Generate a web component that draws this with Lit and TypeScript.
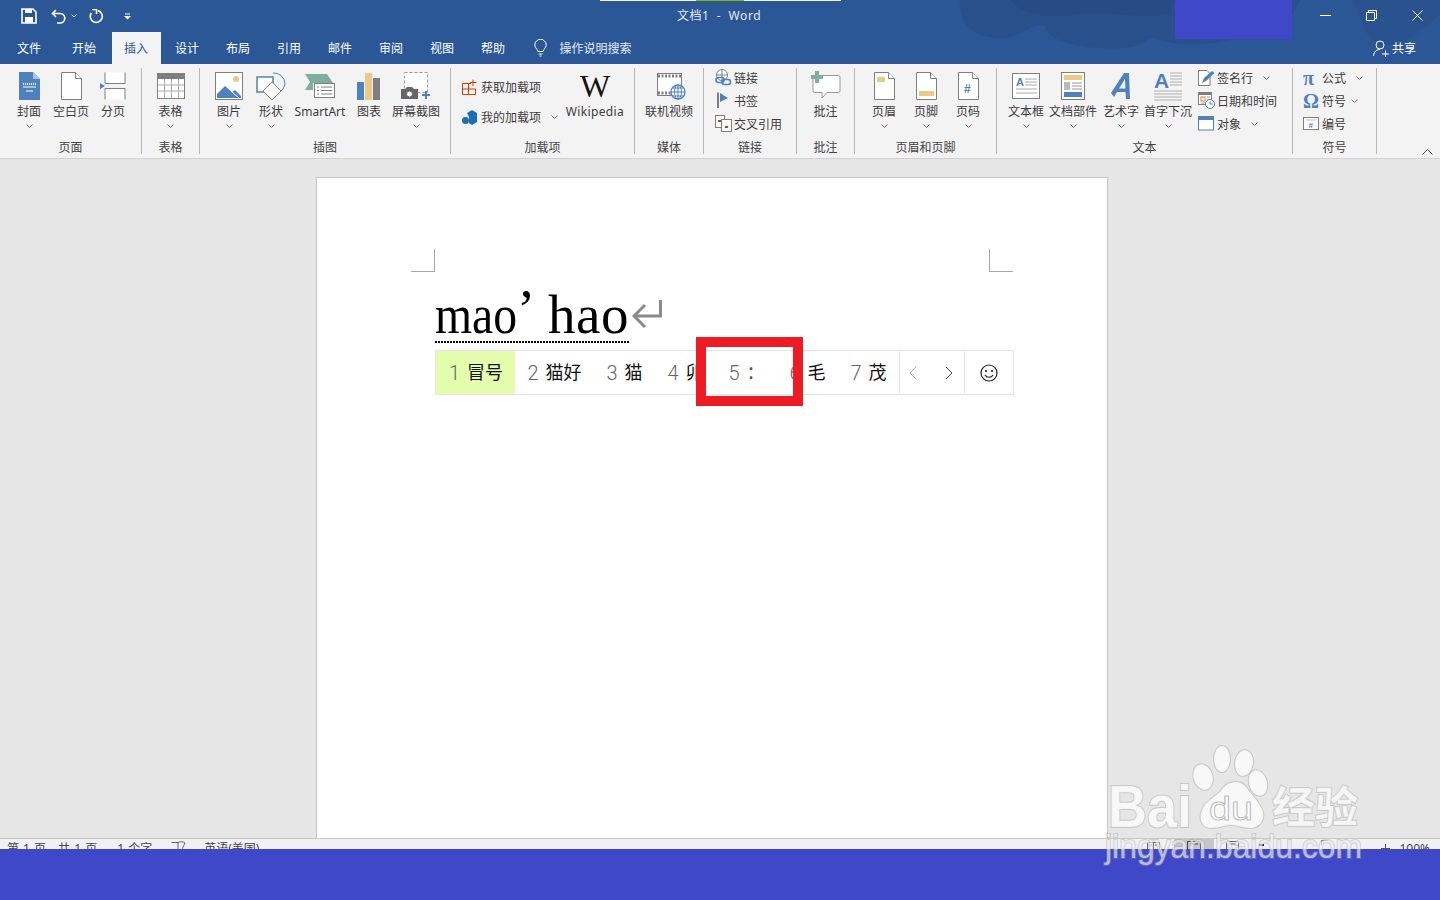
import { LitElement, html, svg, css } from "lit";
import { customElement } from "lit/decorators.js";

const B = "#4f81bd", G = "#7f7f7f", T = "#edc987", M = "#7fae9d", O = "#d83b01";

const chev = html`<svg class="chev" width="7" height="4" viewBox="0 0 7 4"><path d="M.5.5l3 3 3-3" fill="none" stroke="#666"/></svg>`;

const page = (inner: unknown = "") => html`<svg width="21" height="28" viewBox="0 0 21 28"><path d="M.5.5H14.500L20.500 6.500V27.500H.5Z" fill="#fff" stroke="${G}"/><path d="M14.500.5V6.500H20.500" fill="#fff" stroke="${G}"/>${inner}</svg>`;

const I: Record<string, unknown> = {
  cover: html`<svg width="21" height="28" viewBox="0 0 21 28"><path d="M0 0H14L21 7V28H0Z" fill="${B}"/><path d="M14 0L21 7H14Z" fill="#a9c4e2"/><path d="M4 12H17" stroke="#fff" stroke-width="2" stroke-dasharray="1 1"/><path d="M4 15H17M7 19H14" stroke="#fff"/></svg>`,
  blank: page(),
  brk: html`<svg width="26" height="28" viewBox="0 0 26 28"><path d="M5 .5V11.500H25V.5M5 27.500V16.500H25V27.500" fill="#fff" stroke="${G}"/><path d="M0 11L5 14L0 17Z" fill="${B}"/></svg>`,
  table: html`<svg width="28" height="26" viewBox="0 0 28 26"><rect x=".5" y=".5" width="27" height="25" fill="#fff" stroke="${G}"/><rect width="28" height="6" fill="${G}"/><path d="M.5 12H27M.5 18H27M7.500 6V25M14.500 6V25M21.500 6V25" stroke="#aaa"/></svg>`,
  pic: html`<svg width="28" height="28" viewBox="0 0 28 28"><rect x=".5" y=".5" width="27" height="27" fill="#fff" stroke="${G}"/><circle cx="21" cy="7" r="3" fill="${T}"/><path d="M2 26V22L10 14L17 20L20 18L26 24V26Z" fill="${B}"/><path d="M16 19L24 26" stroke="#fff"/></svg>`,
  shape: html`<svg width="30" height="30" viewBox="0 0 30 30"><path d="M17 2A11 11 0 0 1 29 13A11 11 0 0 1 25 20" fill="none" stroke="${B}"/><rect x="1" y="6" width="16" height="15" fill="#fff" stroke="${B}" stroke-width="1.500"/><path d="M16 11L25 20L16 29L7 20Z" fill="#fff" stroke="${G}"/></svg>`,
  smart: html`<svg width="30" height="26" viewBox="0 0 30 26"><path d="M0 1H22L28 10H8V17H0L5 9Z" fill="${M}"/><rect x="9.500" y="10.500" width="20" height="14" fill="#fff" stroke="${G}"/><path d="M16 14H27M16 17.500H27M16 21H27M12 14H14M12 17.500H14M12 21H14" stroke="${G}"/></svg>`,
  chart: html`<svg width="24" height="27" viewBox="0 0 24 27"><rect y="9" width="7" height="18" fill="${B}"/><rect x="8" width="7" height="27" fill="${T}"/><rect x="16" y="5" width="7" height="22" fill="${G}"/></svg>`,
  shot: html`<svg width="30" height="28" viewBox="0 0 30 28"><rect x="3.500" y=".5" width="23" height="20" fill="#fff" stroke="#999" stroke-dasharray="3 2"/><path d="M0 17H4L6 15H11L13 17H17V27H0Z" fill="#666"/><circle cx="8.500" cy="22" r="3" fill="#fff" stroke="#666"/><path d="M25 19V27M21 23H29" stroke="${B}" stroke-width="2"/></svg>`,
  get: html`<svg width="15" height="16" viewBox="0 0 15 16"><path d="M.5 4.500H6.500V15.500H.5ZM.5 10H13.500V15.500H6.500M6.500 4.500H9" fill="none" stroke="${O}"/><path d="M11 .5V7M8 3.500H14.500" stroke="${O}"/></svg>`,
  mine: html`<svg width="15" height="15" viewBox="0 0 15 15"><path d="M5 3L10 0L15 3V12L10 15L7 13V7Z" fill="#1b6fb5"/><circle cx="3.500" cy="10.500" r="3.500" fill="#1b6fb5"/></svg>`,
  video: html`<svg width="30" height="30" viewBox="0 0 30 30" style="margin-left:6px"><rect x=".5" y="2.500" width="24" height="22" fill="#fff" stroke="${G}"/><path d="M1 5H24M1 22H24" stroke="${G}" stroke-width="3" stroke-dasharray="2 1.500"/><circle cx="21" cy="21" r="7" fill="#fff" stroke="${B}" stroke-width="1.300"/><path d="M14 21H28M21 14V28M16 17H26M16 25H26" stroke="${B}"/><ellipse cx="21" cy="21" rx="3.500" ry="7" fill="none" stroke="${B}"/></svg>`,
  link: html`<svg width="17" height="17" viewBox="0 0 17 17"><circle cx="7" cy="6" r="5.500" fill="#fff" stroke="${G}"/><path d="M1.500 6H12.500M7 .5V11.500" stroke="${G}"/><rect x="1" y="8.500" width="8" height="5" rx="2.500" fill="none" stroke="${B}" stroke-width="1.600"/><rect x="7" y="10.500" width="8.500" height="5" rx="2.500" fill="none" stroke="${B}" stroke-width="1.600"/></svg>`,
  flag: html`<svg width="17" height="17" viewBox="0 0 17 17"><path d="M3 .5V16" stroke="${G}" stroke-width="2"/><path d="M5 1L13 6L5 10Z" fill="${B}"/></svg>`,
  xref: html`<svg width="17" height="17" viewBox="0 0 17 17"><rect x=".5" y=".5" width="9" height="12" fill="#fff" stroke="${G}"/><rect x="6.500" y="4.500" width="10" height="12" fill="#fff" stroke="${G}"/><path d="M3 6H6M10 12H13" stroke="${O}" stroke-width="2"/></svg>`,
  note: html`<svg width="30" height="30" viewBox="0 0 30 30"><path d="M3.500 4.500H27.500A1.500 1.500 0 0 1 29 6V20A1.500 1.500 0 0 1 27.500 21.500H16L11 27V21.500H3.500A1.500 1.500 0 0 1 2 20V6A1.500 1.500 0 0 1 3.500 4.500Z" fill="#fff" stroke="#999"/><path d="M6 0V12M0 6H12" stroke="${M}" stroke-width="4"/></svg>`,
  header: page(svg`<rect x="3" y="5" width="8" height="5" fill="${T}"/>`),
  footer: page(svg`<rect x="3" y="19" width="15" height="5" fill="${T}"/>`),
  pnum: page(svg`<text x="6" y="21" font-size="12" font-weight="700" font-family="Liberation Sans" fill="${B}">#</text>`),
  tbox: html`<svg width="28" height="26" viewBox="0 0 28 26"><rect x=".5" y=".5" width="27" height="25" fill="#fff" stroke="${G}"/><text x="4" y="13" font-size="11" font-weight="700" font-family="Liberation Sans" fill="${B}">A</text><path d="M13 6H25M13 9H25M13 12H25M4 16H25M4 20H25" stroke="#aaa"/></svg>`,
  parts: html`<svg width="24" height="28" viewBox="0 0 24 28"><rect x=".5" y=".5" width="23" height="27" fill="#fff" stroke="${G}"/><rect x="3" y="3" width="18" height="5" fill="${T}"/><rect x="3" y="10" width="6" height="8" fill="#bbb"/><path d="M11 11H21M11 14H21M11 17H21" stroke="#999"/><rect x="3" y="20" width="18" height="5" fill="${B}"/></svg>`,
  art: html`<svg width="22" height="28" viewBox="0 0 22 28"><path d="M1 21L14 1H19L20 27H16L15.500 20L7 20L4 25ZM9 16.500H15.500L15 7Z" fill="${B}" fill-rule="evenodd"/></svg>`,
  drop: html`<svg width="29" height="30" viewBox="0 0 29 30"><text x="0" y="17" font-size="21" font-weight="700" font-family="Liberation Sans" fill="${B}">A</text><path d="M16 2H28M16 5H28M16 8H28M16 11H28M16 14H28M0 20H28M0 23H28M0 26H28M0 29H28" stroke="#b0b0b0"/></svg>`,
  sign: html`<svg width="17" height="17" viewBox="0 0 17 17"><path d="M.5 1.500H9L12 4.500V16.500H.5Z" fill="#fff" stroke="${G}"/><path d="M4 14L6 9L14 2L16.500 4L8 12Z" fill="${B}"/></svg>`,
  date: html`<svg width="17" height="17" viewBox="0 0 17 17"><rect x=".5" y=".5" width="13" height="12" fill="#fff" stroke="${G}"/><rect width="14" height="3" fill="${G}"/><rect x="3" y="5" width="4" height="4" fill="#fff" stroke="#d9822b"/><path d="M9 5H12M9 8H12M3 11H12" stroke="#aaa"/><circle cx="12" cy="12" r="4.500" fill="#fff" stroke="${B}"/><path d="M12 9.500V12H14.500" fill="none" stroke="${B}"/></svg>`,
  obj: html`<svg width="17" height="15" viewBox="0 0 17 15"><rect x=".5" y=".5" width="15" height="13.500" fill="#fff" stroke="${B}"/><rect width="16" height="4" fill="${B}"/></svg>`,
  num: html`<svg width="16" height="13" viewBox="0 0 16 13"><rect x=".5" y=".5" width="15" height="12" fill="#fff" stroke="${G}"/><path d="M3 3H13" stroke="#bbb"/><text x="5.500" y="11" font-size="8" font-weight="700" font-family="Liberation Sans" fill="${B}">#</text></svg>`,
};

const L = (label: string, icon: unknown, w: number, more = true) => html`
  <div class="large" style="width:${w}px">
    <div class="lic">${icon}</div>
    <div class="ll">${label}</div>
    ${more ? chev : ""}
  </div>`;

const S = (label: string, icon: unknown, more = false, cls = "") => html`
  <div class="small">
    <span class="sic">${icon}</span><span>${label}</span>${more ? html`<span class="sch ${cls}">${chev}</span>` : ""}
  </div>`;

const Gp = (w: number, label: string, body: unknown, cls = "") => html`
  <section class="group" style="width:${w}px">
    <div class="body ${cls}">${body}</div>
    <div class="gl">${label}</div>
  </section>`;

const tabs = ["文件", "开始", "插入", "设计", "布局", "引用", "邮件", "审阅", "视图", "帮助"];
const cands: [string, string][] = [["1", "冒号"], ["2", "猫好"], ["3", "猫"], ["4", "卯"], ["5", "："], ["6", "毛"], ["7", "茂"]];

@customElement("app-root")
export class AppRoot extends LitElement {
  static styles = css`
    :host { display: block; width: 1440px; height: 900px; position: relative; overflow: hidden; background: #e6e6e6;
      font-family: "Noto Sans", "Noto Sans CJK SC", sans-serif; font-size: 12px; color: #3c3c3c; }
    svg { display: block; }
    .head { height: 64px; background: #2b5797; position: relative; color: #fff; }
    .blobs { position: absolute; left: 940px; top: 0; }
    .strip { position: absolute; left: 600px; top: 0; width: 241px; height: 1px; background: #f4f4f4; }
    .strip i { display: block; margin-left: 96px; width: 48px; height: 1px; background: #7fba00; }
    .patch { position: absolute; left: 1175px; top: 0; width: 117px; height: 39px; background: #3f48c9; }
    .title { display: grid; grid-template-columns: 677px auto 1fr; height: 32px; position: relative; align-items: center; }
    .quick { display: flex; align-items: center; padding-left: 21px; }
    .cap { color: #e4eaf3; font-size: 12px; letter-spacing: .55px; white-space: pre; margin-top: -2px; }
    .win { display: flex; justify-content: flex-end; margin-top: -2px; }
    .win span { width: 46px; display: flex; justify-content: center; }
    .tabs { display: flex; height: 32px; position: relative; gap: 2px; padding-left: 4.5px; align-items: stretch; }
    .tab { width: 49px; display: flex; align-items: center; justify-content: center; color: #fff; }
    .tab.t1 { margin-left: 4px; }
    .tab.t2 { margin-left: 1px; }
    .tab.on { background: #f3f3f3; color: #2b5797; }
    .tell { display: flex; align-items: center; margin-left: 14px; gap: 13px; color: #e6ecf5; }
    .share { margin-left: auto; display: flex; align-items: center; gap: 3px; margin-right: 24px; }
    .ribbon { background: #f3f3f3; border-bottom: 1px solid #d2d2d2; display: flex; padding-top: 4px; height: 90px; }
    .group { height: 86px; border-right: 1px solid #b8b8b8; box-sizing: border-box; flex: none; display: flex; flex-direction: column; }
    .body { height: 73px; display: flex; white-space: nowrap; flex: none; }
    .c { justify-content: center; }
    .p8 { padding-left: 8px; } .p11 { padding-left: 11px; } .p6 { padding-left: 6px; } .p10 { padding-left: 10px; }
    .gl { height: 13px; line-height: 14px; text-align: center; color: #444; flex: none; }
    .large { flex: none; display: flex; flex-direction: column; align-items: center; padding-top: 2px; }
    .lic { height: 32px; margin-bottom: 2px; display: flex; align-items: center; justify-content: center; }
    .ll { height: 16px; line-height: 16px; }
    .chev { margin-top: 4px; }
    .sch .chev { margin: 0; }
    .col { display: flex; flex-direction: column; margin-top: -2px; }
    .col.tight { margin-top: 8px; gap: 8px; width: 103px; }
    .col.rows { margin-left: 7px; }
    .small { display: flex; align-items: center; height: 23px; }
    .col.tight .small { height: 22px; }
    .sic { width: 19px; flex: none; display: flex; align-items: center; }
    .sch { margin-left: 10px; } .sch.near { margin-left: 5px; }
    .glyph { font: 700 20px "Liberation Serif", serif; color: #4f81bd; line-height: 1; }
    .wmark { font: 400 32px/32px "Liberation Serif", serif; color: #111; height: 32px; display: block; }
    .wiki { letter-spacing: .35px; }
    .caret { margin-left: auto; margin-right: 7px; align-self: flex-end; margin-bottom: 3px; }
    .work { height: 679px; background: #e6e6e6; }
    .doc { margin-left: 316px; width: 792px; height: 661px; position: relative; top: 18px; box-sizing: border-box; background: #fff; border: 1px solid #c6c6c6; border-bottom: 0; padding-top: 71px; }
    .marks { margin-left: 94px; width: 602px; height: 23px; display: flex; justify-content: space-between; }
    .mk { width: 24px; height: 23px; box-sizing: border-box; border-bottom: 1px solid #a6a6a6; border-right: 1px solid #a6a6a6; }
    .mk.r { border-right: 0; border-left: 1px solid #a6a6a6; }
    .line { margin-left: 118px; display: flex; height: 70px; }
    .ink { height: 69px; box-sizing: border-box; padding-top: 18.4px; font: 400 55px/50px "Liberation Serif", serif; color: #000; white-space: pre; display: flex; width: 194px; }
    .ink span { display: block; flex: none; }
    .ink .mao { width: 82px; transform: scaleX(.866); transform-origin: left; }
    .ink .q { width: 31px; transform: translateY(-6px); }
    .ink .hao { width: 81px; letter-spacing: .5px; }
    .dots { height: 2px; width: 194px; background: repeating-linear-gradient(90deg, #000 0 2px, transparent 2px 3px); }
    .ret { margin: 28px 0 0 3px; }
    .ime { margin: 8px 0 0 118px; width: 579px; height: 45px; box-sizing: border-box; border: 1px solid #e4e4e4; display: flex; align-items: stretch; background: #fff; font-size: 18px; color: #111; font-family: "Noto Sans CJK SC", sans-serif; }
    .cand { display: flex; align-items: center; padding: 0 12.5px; flex: none; }
    .cand.on { background: #e4fdad; padding: 0 12px 0 13px; }
    .cand b { font: 300 20px Roboto, "Liberation Sans", sans-serif; color: #666; width: 10px; margin-right: 8px; }
    .cand .t { margin-bottom: 3px; }
    .cand .dim { color: #555; }
    .nav { border-left: 1px solid #e4e4e4; display: flex; align-items: center; flex: none; }
    .nav.a { width: 65px; justify-content: space-between; box-sizing: border-box; padding: 0 11px 0 9px; }
    .nav.b { flex: 1; justify-content: center; }
    .red { position: absolute; left: 379px; top: 159px; width: 107px; height: 69px; box-sizing: border-box; border: 10px solid #ed1c24; }
    .status { height: 10px; border-top: 1px solid #c8c8c8; background: #f1f1f1; overflow: hidden; display: flex; line-height: 19px; font-size: 12px; color: #444; white-space: pre; word-spacing: 1px; }
    .status > * { flex: none; }
    .hl { background: #c6c6c6; width: 40px; height: 10px; display: flex; justify-content: center; }
    .ico { margin-top: 1px; }
    .blue { height: 51px; background: #3f48c9; }
    .wm { position: absolute; left: 1100px; top: 740px; pointer-events: none; }
  `;

  render() {
    return html`
      <header class="head">
        <svg class="blobs" width="500" height="64" viewBox="0 0 500 64">
          <path d="M20 0C18 20 30 38 60 38C85 38 90 22 105 26C110 45 150 50 185 48C205 46 205 38 215 38C230 44 260 48 290 40C320 34 340 28 350 20L360 0Z" fill="#29508b"/>
          <path d="M70 0C80 14 110 20 140 14C170 10 200 20 230 14L235 0Z" fill="#274c85"/>
          <path d="M410 0C425 12 418 34 440 44C465 50 488 24 500 14V0Z" fill="#29528f"/>
        </svg>
        <div class="strip"><i></i></div>
        <div class="patch"></div>
        <div class="title">
          <div class="quick">
            <svg width="16" height="16" viewBox="0 0 16 16"><path d="M1 1H12L15 4V15H1Z" fill="none" stroke="#fff" stroke-width="1.600"/><rect x="4" y="1" width="7" height="4" fill="#fff"/><rect x="4" y="9" width="8" height="6" fill="#fff"/></svg>
            <svg style="margin-left:14px" width="15" height="15" viewBox="0 0 15 15"><path d="M5 1L1.500 4.500L5 8M2 4.500H9A4.500 4.500 0 0 1 9 14H6" fill="none" stroke="#fff" stroke-width="1.600"/></svg>
            <svg style="margin-left:5px" width="6" height="4" viewBox="0 0 6 4"><path d="M.5.5L3 3L5.500.5" fill="none" stroke="#d5dfee"/></svg>
            <svg style="margin-left:12px" width="15" height="15" viewBox="0 0 15 15"><path d="M4 2.500A6 6 0 1 0 11 2.500" fill="none" stroke="#fff" stroke-width="1.600" transform="rotate(-20 7.500 8)"/><path d="M3 .5H7.500V5" fill="none" stroke="#fff" stroke-width="1.500"/></svg>
            <svg style="margin-left:20px" width="7" height="7" viewBox="0 0 7 7"><path d="M1 1H6" stroke="#fff"/><path d="M0 3H7L3.500 6.500Z" fill="#fff"/></svg>
          </div>
          <div class="cap">文档1  -  Word</div>
          <div class="win">
            <span><svg width="11" height="11" viewBox="0 0 11 11"><path d="M0 5.500H11" stroke="#fff"/></svg></span>
            <span><svg width="11" height="11" viewBox="0 0 11 11"><path d="M.5 2.500H8.500V10.500H.5ZM2.500 2.500V.5H10.500V8.500H8.500" fill="none" stroke="#fff"/></svg></span>
            <span><svg width="11" height="11" viewBox="0 0 11 11"><path d="M.5.5L10.500 10.500M10.500.5L.5 10.500" stroke="#fff"/></svg></span>
          </div>
        </div>
        <nav class="tabs">
          ${tabs.map((t, i) => html`<div class="tab ${i === 1 ? "t1" : ""} ${i === 2 ? "t2 on" : ""}">${t}</div>`)}
          <div class="tell">
            <svg width="13" height="18" viewBox="0 0 13 18"><path d="M4 12.500C3 9.500 .8 8.500 .8 6A5.700 5.700 0 0 1 12.200 6C12.200 8.500 10 9.500 9 12.500ZM4.500 15H8.500M5.500 17H7.500" fill="none" stroke="#fff"/></svg>
            <span>操作说明搜索</span>
          </div>
          <div class="share">
            <svg width="16" height="17" viewBox="0 0 16 17"><circle cx="7" cy="5" r="4" fill="none" stroke="#fff"/><path d="M.5 16C1 11 4 9.500 7 9.500M9 14H16M12.500 10.500V17" fill="none" stroke="#fff"/></svg>
            <span>共享</span>
          </div>
        </nav>
      </header>

      <div class="ribbon">
        ${Gp(142, "页面", html`${L("封面", I.cover, 42)}${L("空白页", I.blank, 42, false)}${L("分页", I.brk, 42, false)}`, "p8")}
        ${Gp(58, "表格", L("表格", I.table, 42), "c")}
        ${Gp(251, "插图", html`${L("图片", I.pic, 42)}${L("形状", I.shape, 42)}${L("SmartArt", I.smart, 56, false)}${L("图表", I.chart, 42, false)}${L("屏幕截图", I.shot, 52)}`, "p8")}
        ${Gp(184, "加载项", html`
          <div class="col tight">${S("获取加载项", I.get)}${S("我的加载项", I.mine, true)}</div>
          <div class="large" style="width:60px">
            <div class="lic"><span class="wmark">W</span></div>
            <div class="ll wiki">Wikipedia</div>
          </div>`, "p11")}
        ${Gp(69, "媒体", L("联机视频", I.video, 52, false), "c")}
        ${Gp(93, "链接", html`<div class="col">${S("链接", I.link)}${S("书签", I.flag)}${S("交叉引用", I.xref)}</div>`, "p11")}
        ${Gp(58, "批注", L("批注", I.note, 42, false), "c")}
        ${Gp(142, "页眉和页脚", html`${L("页眉", I.header, 42)}${L("页脚", I.footer, 42)}${L("页码", I.pnum, 42)}`, "p8")}
        ${Gp(296, "文本", html`${L("文本框", I.tbox, 46)}${L("文档部件", I.parts, 48)}${L("艺术字", I.art, 48)}${L("首字下沉", I.drop, 46)}
          <div class="col rows">${S("签名行", I.sign, true)}${S("日期和时间", I.date)}${S("对象", I.obj, true)}</div>`, "p6")}
        ${Gp(84, "符号", html`<div class="col">
          ${S("公式", html`<span class="glyph">π</span>`, true)}
          ${S("符号", html`<span class="glyph">Ω</span>`, true, "near")}
          ${S("编号", I.num)}</div>`, "p10")}
        <svg class="caret" width="11" height="6" viewBox="0 0 11 6"><path d="M.5 5.500L5.500.5L10.500 5.500" fill="none" stroke="#555"/></svg>
      </div>

      <main class="work">
        <article class="doc">
          <div class="marks"><i class="mk"></i><i class="mk r"></i></div>
          <div class="line">
            <div>
              <div class="ink"><span class="mao">mao</span><span class="q">’</span><span class="hao">hao</span></div>
              <div class="dots"></div>
            </div>
            <svg class="ret" width="30" height="28" viewBox="0 0 30 28"><path d="M28.500 0V16H2M13 5L2 16L13 27" fill="none" stroke="#8a8a8a" stroke-width="3"/></svg>
          </div>
          <div class="ime">
            ${cands.map(([n, c], i) => html`<div class="cand ${i === 0 ? "on" : ""}"><b>${n}</b><span class="t ${i === 4 ? "dim" : ""}">${c}</span></div>`)}
            <div class="nav a">
              <svg width="8" height="14" viewBox="0 0 8 14"><path d="M7 1L1 7L7 13" fill="none" stroke="#aaa"/></svg>
              <svg width="8" height="14" viewBox="0 0 8 14"><path d="M1 1L7 7L1 13" fill="none" stroke="#444"/></svg>
            </div>
            <div class="nav b">
              <svg width="18" height="18" viewBox="0 0 18 18"><circle cx="9" cy="9" r="8" fill="none" stroke="#222" stroke-width="1.200"/><circle cx="6" cy="7" r="1.100" fill="#222"/><circle cx="12" cy="7" r="1.100" fill="#222"/><path d="M5 11C6.500 14 11.500 14 13 11" fill="none" stroke="#222" stroke-width="1.200"/></svg>
            </div>
          </div>
          <div class="red"></div>
        </article>
      </main>

      <footer class="status">
        <span style="margin-left:7px">第 1 页，共 1 页</span>
        <span style="margin-left:20px">1 个字</span>
        <svg class="ico" style="margin-left:19px" width="15" height="14" viewBox="0 0 15 14"><path d="M.5 2.500H7V14M7 2.500C8 1.500 13 1.500 14 3L11 9" fill="none" stroke="#666"/></svg>
        <span style="margin-left:18px">英语(美国)</span>
        <span style="margin-left:888px;width:0"></span>
        <svg class="ico" width="13" height="14" viewBox="0 0 13 14"><path d="M.5 2.500H12.500V14M.5 2.500V14M6.500 2.500V14M2 5H5M8 5H11" fill="none" stroke="#666"/></svg>
        <div class="hl" style="margin-left:14px"><svg class="ico" width="14" height="14" viewBox="0 0 14 14"><path d="M.5 1.500H13.500V14M.5 1.500V14M3 4H11" fill="none" stroke="#444"/></svg></div>
        <svg class="ico" style="margin-left:12px" width="13" height="14" viewBox="0 0 13 14"><path d="M.5 1.500H12.500V14M.5 1.500V14M3 4H10" fill="none" stroke="#666"/></svg>
        <svg class="ico" style="margin-left:20px" width="5" height="6" viewBox="0 0 5 6"><rect y="4" width="5" height="2" fill="#111"/></svg>
        <svg class="ico" style="margin-left:57px" width="7" height="8" viewBox="0 0 7 8"><path d="M.5 5V.5H6.500" fill="none" stroke="#666"/></svg>
        <svg class="ico" style="margin-left:53px" width="9" height="10" viewBox="0 0 9 10"><path d="M4.500 4V10M0 8.500H9" stroke="#555"/></svg>
        <span style="margin-left:9px">100%</span>
      </footer>
      <div class="blue"></div>

      <svg class="wm" width="270" height="135" viewBox="0 0 270 135">
        <g fill="#fafafa" fill-opacity=".85" stroke="#9c9c9c" stroke-opacity=".4" stroke-width="2" paint-order="stroke">
          <text x="8" y="87" font-size="60" font-weight="700" font-family="Liberation Sans" textLength="84" lengthAdjust="spacingAndGlyphs">Bai</text>
          <ellipse cx="103" cy="37" rx="9.500" ry="13" transform="rotate(-15 103 37)"/>
          <ellipse cx="122" cy="19" rx="8" ry="13"/>
          <ellipse cx="144" cy="23" rx="9" ry="13" transform="rotate(8 144 23)"/>
          <ellipse cx="158" cy="43" rx="9" ry="13" transform="rotate(-15 158 43)"/>
          <path d="M111 88C101 88 98 78 103 68C108 58 118 56 123 48C129 40 142 40 147 48C152 56 160 62 163 72C165 82 158 88 150 88C142 88 138 85 131 85C124 85 120 88 111 88Z"/>
          <text x="172" y="83" font-size="43" font-weight="700" font-family="Noto Sans CJK SC" textLength="86" lengthAdjust="spacingAndGlyphs">经验</text>
          <text x="5" y="118" font-size="34" font-family="Liberation Sans" textLength="257" lengthAdjust="spacingAndGlyphs" fill-opacity=".62">jingyan.baidu.com</text>
        </g>
        <text x="109" y="80" font-size="34" font-family="Liberation Sans" fill="#fff" stroke="#8f8f8f" stroke-opacity=".6" stroke-width="1" textLength="44" lengthAdjust="spacingAndGlyphs">du</text>
      </svg>
    `;
  }
}
